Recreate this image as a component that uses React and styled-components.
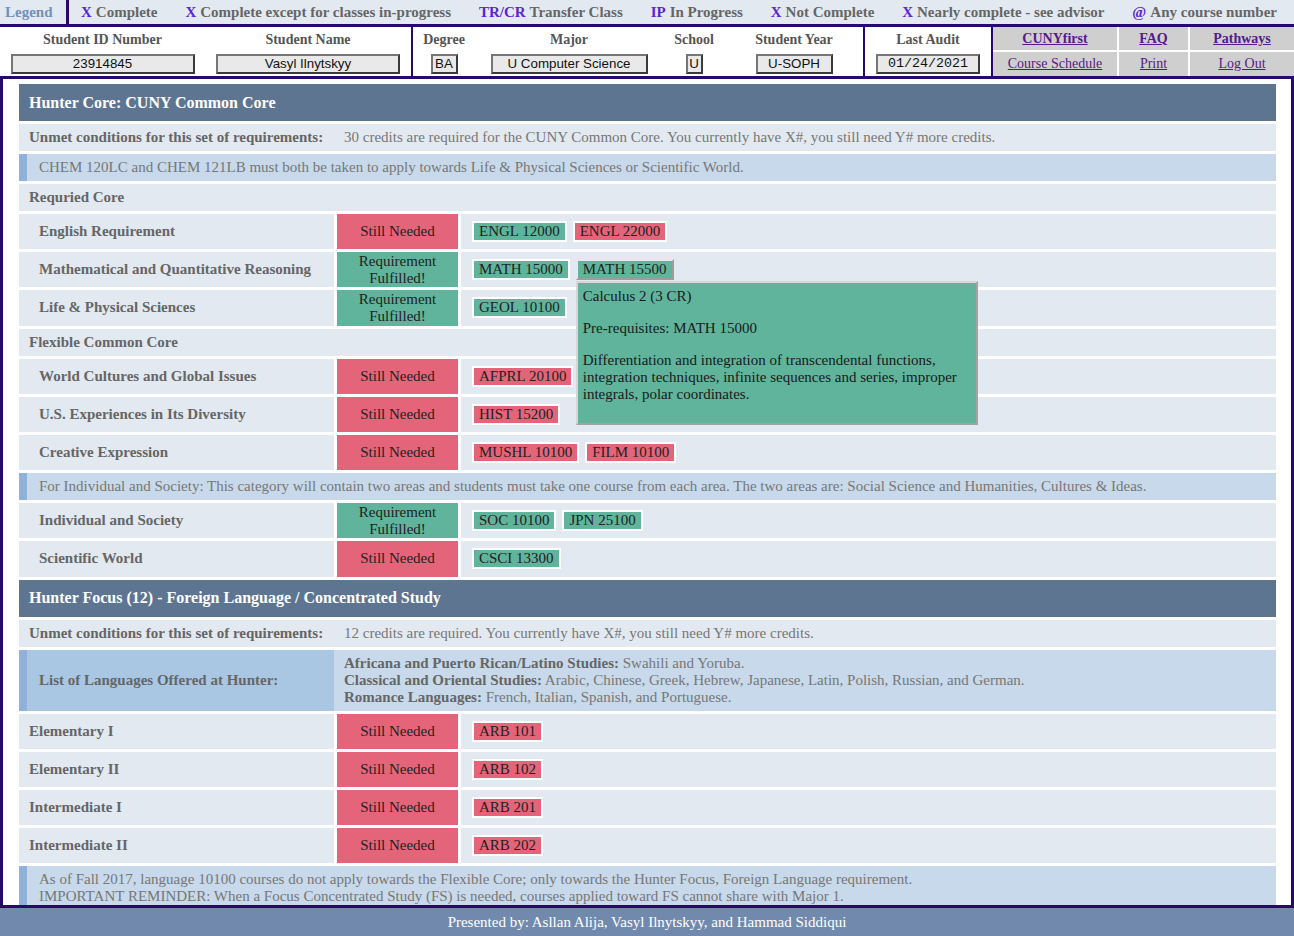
import React from "react";
import styled, { createGlobalStyle, css } from "styled-components";

const PURPLE = "#27096b";
const ROW_BG = "#e3e9f0";
const NOTE_BG = "#c7d9ea";
const NOTE_BAR = "#8fb1da";
const GREEN = "#5fb49b";
const RED = "#e4657a";

const GlobalStyle = createGlobalStyle`
  html, body {
    margin: 0;
    padding: 0;
  }
  body {
    font-family: "Liberation Serif", "Times New Roman", serif;
    font-size: 15px;
    background: #fff;
  }
`;

const Page = styled.div`
  height: 100vh;
  display: flex;
  flex-direction: column;
  overflow: hidden;
`;

/* legend */

const LegendBar = styled.div`
  display: flex;
  align-items: stretch;
  height: 24px;
  background: ${ROW_BG};
  border-bottom: 3px solid ${PURPLE};
  font-weight: bold;
  color: #666;
  line-height: 24px;
`;

const LegendTitle = styled.div`
  width: 61px;
  padding-left: 5px;
  color: #7391b9;
  border-right: 3px solid ${PURPLE};
`;

const LegendItems = styled.div`
  flex: 1;
  display: flex;
  justify-content: space-between;
  padding: 0 17px 0 12px;
`;

const Mark = styled.span`
  color: #5a25d2;
  margin-right: 4px;
`;

/* header */

const Header = styled.div`
  display: flex;
  height: 49px;
  border-bottom: 3px solid ${PURPLE};
`;

const Group = styled.div`
  box-sizing: border-box;
  display: flex;
  flex: none;
  width: ${(p) => p.$w}px;
  border-right: 2px solid ${PURPLE};
`;

const Field = styled.div`
  width: ${(p) => p.$w}px;
  display: flex;
  flex-direction: column;
  align-items: center;
  padding-top: 4px;
  gap: 5px;
`;

const FieldLabel = styled.div`
  font-size: 14px;
  font-weight: bold;
  color: #555;
  line-height: 18px;
`;

const FieldBox = styled.div`
  box-sizing: border-box;
  width: ${(p) => p.$w}px;
  height: 20px;
  background: #e9e9e9;
  border: 2px solid #3a3a3a;
  border-top-color: #767676;
  border-left-color: #767676;
  font-family: ${(p) =>
    p.$mono
      ? '"Liberation Mono", "Courier New", monospace'
      : '"Liberation Sans", Arial, sans-serif'};
  font-size: 13.33px;
  line-height: 16px;
  text-align: center;
  color: #111;
  white-space: nowrap;
`;

const LinkGrid = styled.div`
  flex: 1;
  display: grid;
  grid-template-columns: 124px 69px 1fr;
  grid-template-rows: 23px 1fr;
  gap: 2px;
  background: #fff;
`;

const LinkCell = styled.div`
  background: #cfcfcf;
  display: flex;
  align-items: center;
  justify-content: center;
`;

const NavLink = styled.a`
  color: #551a8b;
  text-decoration: underline;
  font-size: 14px;
  font-weight: ${(p) => (p.$bold ? "bold" : "normal")};
  cursor: pointer;
`;

/* audit frame */

const Frame = styled.div`
  flex: 1;
  min-height: 0;
  overflow: hidden;
  border-left: 3px solid ${PURPLE};
  border-right: 3px solid ${PURPLE};
  padding: 5px 15px 0 16px;
  display: flex;
  flex-direction: column;
  gap: 3px;
`;

const SectionHeader = styled.div`
  flex: none;
  height: 37px;
  display: flex;
  align-items: center;
  padding-left: 10px;
  background: #5e7592;
  color: #fff;
  font-size: 16px;
  font-weight: bold;
`;

const InfoRow = styled.div`
  flex: none;
  display: grid;
  grid-template-columns: 325px 1fr;
  align-items: center;
  min-height: 27px;
  background: ${ROW_BG};
  color: #777;
  line-height: 17px;
`;

const InfoLabel = styled.div`
  padding-left: 10px;
  font-weight: bold;
  color: #666;
`;

const SubHeading = styled.div`
  flex: none;
  height: 27px;
  display: flex;
  align-items: center;
  padding-left: 10px;
  background: ${ROW_BG};
  color: #666;
  font-weight: bold;
`;

const Note = styled.div`
  flex: none;
  background: ${NOTE_BG};
  border-left: 8px solid ${NOTE_BAR};
  padding: 5px 12px;
  color: #777;
  line-height: 17px;
`;

const LangRow = styled.div`
  flex: none;
  display: grid;
  grid-template-columns: 315px 1fr;
  line-height: 17px;
`;

const LangLabel = styled.div`
  display: flex;
  align-items: center;
  background: #a9c6e3;
  border-left: 8px solid ${NOTE_BAR};
  padding-left: 12px;
  color: #666;
  font-weight: bold;
`;

const LangList = styled.div`
  background: ${NOTE_BG};
  padding: 5px 10px;
  color: #777;

  b {
    color: #666;
  }
`;

const CourseRow = styled.div`
  flex: none;
  display: grid;
  grid-template-columns: 315px 121px 1fr;
  column-gap: 3px;
  height: 35.2px;
`;

const ReqLabel = styled.div`
  display: flex;
  align-items: center;
  background: ${ROW_BG};
  padding-left: ${(p) => (p.$indent ? 20 : 10)}px;
  color: #666;
  font-weight: bold;
`;

const Status = styled.div`
  display: flex;
  align-items: center;
  justify-content: center;
  text-align: center;
  line-height: 17px;
  color: #222;
  background: ${(p) => (p.$done ? GREEN : RED)};
`;

const Courses = styled.div`
  display: flex;
  align-items: center;
  gap: 6px;
  padding-left: 11px;
  background: ${ROW_BG};
`;

const Chip = styled.span`
  position: relative;
  padding: 0 5px;
  line-height: 17px;
  color: #222;
  background: ${(p) => (p.$ok ? GREEN : RED)};
  border: 2px solid #fff;
  ${(p) =>
    p.$hover &&
    css`
      border-color: ${ROW_BG} #9d9d9d #9d9d9d ${ROW_BG};
    `}
`;

const Tooltip = styled.div`
  position: absolute;
  z-index: 10;
  top: calc(100% + 3px);
  left: -2px;
  box-sizing: border-box;
  width: 402px;
  padding: 5px 5px 5px;
  background: ${GREEN};
  border: 2px solid;
  border-color: #d6d6d6 #a3a3a3 #a3a3a3 #d6d6d6;
  color: #1a1a1a;
  line-height: 17px;

  p {
    margin: 0 0 15px;
  }
`;

const Footer = styled.div`
  flex: none;
  height: 28px;
  border-top: 3px solid ${PURPLE};
  background: #7089ad;
  color: #fff;
  display: flex;
  align-items: center;
  justify-content: center;
`;

const legend = [
  ["X", "Complete"],
  ["X", "Complete except for classes in-progress"],
  ["TR/CR", "Transfer Class"],
  ["IP", "In Progress"],
  ["X", "Not Complete"],
  ["X", "Nearly complete - see advisor"],
  ["@", "Any course number"],
];

function Requirement({ label, indent, done, courses }) {
  return (
    <CourseRow>
      <ReqLabel $indent={indent}>{label}</ReqLabel>
      <Status $done={done}>
        {done ? (
          <span>
            Requirement
            <br />
            Fulfilled!
          </span>
        ) : (
          "Still Needed"
        )}
      </Status>
      <Courses>
        {courses.map(([code, ok, tip]) => (
          <Chip key={code} $ok={ok} $hover={!!tip}>
            {code}
            {tip && (
              <Tooltip>
                <p>Calculus 2 (3 CR)</p>
                <p>Pre-requisites: MATH 15000</p>
                <p>
                  Differentiation and integration of transcendental functions,
                  integration techniques, infinite sequences and series,
                  improper integrals, polar coordinates.
                </p>
              </Tooltip>
            )}
          </Chip>
        ))}
      </Courses>
    </CourseRow>
  );
}

export default function App() {
  return (
    <Page>
      <GlobalStyle />
      <LegendBar>
        <LegendTitle>Legend</LegendTitle>
        <LegendItems>
          {legend.map(([m, t]) => (
            <span key={t}>
              <Mark>{m}</Mark>
              {t}
            </span>
          ))}
        </LegendItems>
      </LegendBar>

      <Header>
        <Group $w={413}>
          <Field $w={205}>
            <FieldLabel>Student ID Number</FieldLabel>
            <FieldBox $w={184}>23914845</FieldBox>
          </Field>
          <Field $w={206}>
            <FieldLabel>Student Name</FieldLabel>
            <FieldBox $w={184}>Vasyl Ilnytskyy</FieldBox>
          </Field>
        </Group>
        <Group $w={452}>
          <Field $w={62}>
            <FieldLabel>Degree</FieldLabel>
            <FieldBox $w={27}>BA</FieldBox>
          </Field>
          <Field $w={188}>
            <FieldLabel>Major</FieldLabel>
            <FieldBox $w={157}>U Computer Science</FieldBox>
          </Field>
          <Field $w={62}>
            <FieldLabel>School</FieldLabel>
            <FieldBox $w={17}>U</FieldBox>
          </Field>
          <Field $w={138}>
            <FieldLabel>Student Year</FieldLabel>
            <FieldBox $w={77}>U-SOPH</FieldBox>
          </Field>
        </Group>
        <Group $w={128}>
          <Field $w={126}>
            <FieldLabel>Last Audit</FieldLabel>
            <FieldBox $w={104} $mono>
              01/24/2021
            </FieldBox>
          </Field>
        </Group>
        <LinkGrid>
          <LinkCell>
            <NavLink $bold>CUNYfirst</NavLink>
          </LinkCell>
          <LinkCell>
            <NavLink $bold>FAQ</NavLink>
          </LinkCell>
          <LinkCell>
            <NavLink $bold>Pathways</NavLink>
          </LinkCell>
          <LinkCell>
            <NavLink>Course Schedule</NavLink>
          </LinkCell>
          <LinkCell>
            <NavLink>Print</NavLink>
          </LinkCell>
          <LinkCell>
            <NavLink>Log Out</NavLink>
          </LinkCell>
        </LinkGrid>
      </Header>

      <Frame>
        <SectionHeader>Hunter Core: CUNY Common Core</SectionHeader>
        <InfoRow>
          <InfoLabel>Unmet conditions for this set of requirements:</InfoLabel>
          <span>
            30 credits are required for the CUNY Common Core. You currently
            have X#, you still need Y# more credits.
          </span>
        </InfoRow>
        <Note>
          CHEM 120LC and CHEM 121LB must both be taken to apply towards Life &amp;
          Physical Sciences or Scientific World.
        </Note>
        <SubHeading>Requried Core</SubHeading>
        <Requirement
          indent
          label="English Requirement"
          courses={[
            ["ENGL 12000", true],
            ["ENGL 22000", false],
          ]}
        />
        <Requirement
          indent
          done
          label="Mathematical and Quantitative Reasoning"
          courses={[
            ["MATH 15000", true],
            ["MATH 15500", true, true],
          ]}
        />
        <Requirement
          indent
          done
          label="Life & Physical Sciences"
          courses={[["GEOL 10100", true]]}
        />
        <SubHeading>Flexible Common Core</SubHeading>
        <Requirement
          indent
          label="World Cultures and Global Issues"
          courses={[["AFPRL 20100", false]]}
        />
        <Requirement
          indent
          label="U.S. Experiences in Its Diversity"
          courses={[["HIST 15200", false]]}
        />
        <Requirement
          indent
          label="Creative Expression"
          courses={[
            ["MUSHL 10100", false],
            ["FILM 10100", false],
          ]}
        />
        <Note>
          For Individual and Society: This category will contain two areas and
          students must take one course from each area. The two areas are:
          Social Science and Humanities, Cultures &amp; Ideas.
        </Note>
        <Requirement
          indent
          done
          label="Individual and Society"
          courses={[
            ["SOC 10100", true],
            ["JPN 25100", true],
          ]}
        />
        <Requirement
          indent
          label="Scientific World"
          courses={[["CSCI 13300", true]]}
        />

        <SectionHeader>
          Hunter Focus (12) - Foreign Language / Concentrated Study
        </SectionHeader>
        <InfoRow>
          <InfoLabel>Unmet conditions for this set of requirements:</InfoLabel>
          <span>
            12 credits are required. You currently have X#, you still need Y#
            more credits.
          </span>
        </InfoRow>
        <LangRow>
          <LangLabel>List of Languages Offered at Hunter:</LangLabel>
          <LangList>
            <b>Africana and Puerto Rican/Latino Studies:</b> Swahili and Yoruba.
            <br />
            <b>Classical and Oriental Studies:</b> Arabic, Chinese, Greek,
            Hebrew, Japanese, Latin, Polish, Russian, and German.
            <br />
            <b>Romance Languages:</b> French, Italian, Spanish, and Portuguese.
          </LangList>
        </LangRow>
        <Requirement label="Elementary I" courses={[["ARB 101", false]]} />
        <Requirement label="Elementary II" courses={[["ARB 102", false]]} />
        <Requirement label="Intermediate I" courses={[["ARB 201", false]]} />
        <Requirement label="Intermediate II" courses={[["ARB 202", false]]} />
        <Note>
          As of Fall 2017, language 10100 courses do not apply towards the
          Flexible Core; only towards the Hunter Focus, Foreign Language
          requirement.
          <br />
          IMPORTANT REMINDER: When a Focus Concentrated Study (FS) is needed,
          courses applied toward FS cannot share with Major 1.
        </Note>
      </Frame>

      <Footer>
        Presented by: Asllan Alija, Vasyl Ilnytskyy, and Hammad Siddiqui
      </Footer>
    </Page>
  );
}
